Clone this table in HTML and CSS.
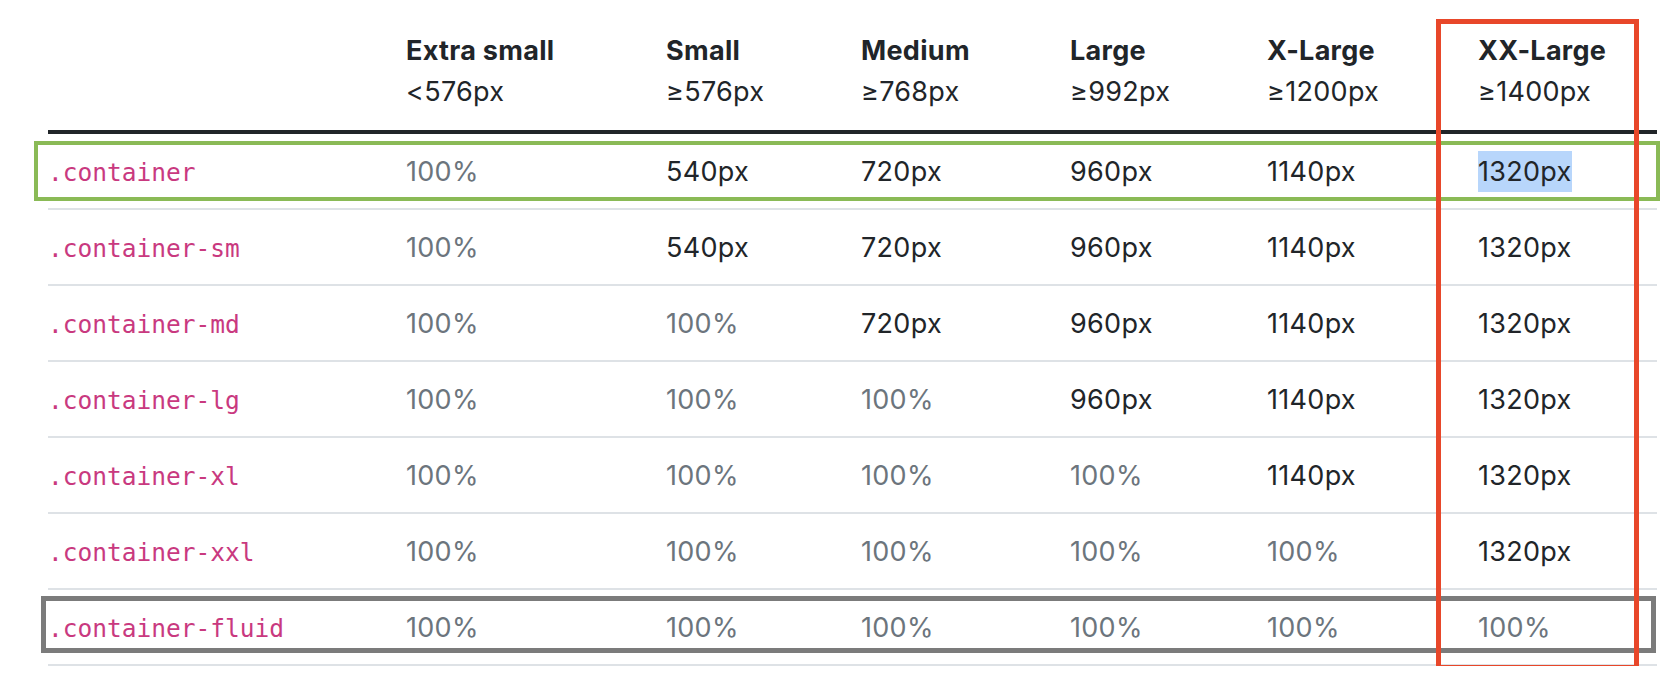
FILE: index.html
```html
<!DOCTYPE html>
<html lang="en">
<head>
<meta charset="utf-8">
<title>Containers</title>
<link rel="stylesheet" href="styles.css">
</head>
<body>
<div class="page">
  <table class="bp-table">
    <colgroup>
      <col class="c-name"><col class="c-xs"><col class="c-sm"><col class="c-md"><col class="c-lg"><col class="c-xl"><col class="c-xxl">
    </colgroup>
    <thead>
      <tr>
        <th></th>
        <th>Extra small<br><span class="bp">&lt;576px</span></th>
        <th>Small<br><span class="bp">&ge;576px</span></th>
        <th>Medium<br><span class="bp">&ge;768px</span></th>
        <th>Large<br><span class="bp">&ge;992px</span></th>
        <th>X-Large<br><span class="bp">&ge;1200px</span></th>
        <th>XX-Large<br><span class="bp">&ge;1400px</span></th>
      </tr>
    </thead>
    <tbody>
      <tr>
        <td><code>.container</code></td>
        <td class="muted">100%</td><td>540px</td><td>720px</td><td>960px</td><td>1140px</td><td><span class="sel">1320px</span></td>
      </tr>
      <tr>
        <td><code>.container-sm</code></td>
        <td class="muted">100%</td><td>540px</td><td>720px</td><td>960px</td><td>1140px</td><td>1320px</td>
      </tr>
      <tr>
        <td><code>.container-md</code></td>
        <td class="muted">100%</td><td class="muted">100%</td><td>720px</td><td>960px</td><td>1140px</td><td>1320px</td>
      </tr>
      <tr>
        <td><code>.container-lg</code></td>
        <td class="muted">100%</td><td class="muted">100%</td><td class="muted">100%</td><td>960px</td><td>1140px</td><td>1320px</td>
      </tr>
      <tr>
        <td><code>.container-xl</code></td>
        <td class="muted">100%</td><td class="muted">100%</td><td class="muted">100%</td><td class="muted">100%</td><td>1140px</td><td>1320px</td>
      </tr>
      <tr>
        <td><code>.container-xxl</code></td>
        <td class="muted">100%</td><td class="muted">100%</td><td class="muted">100%</td><td class="muted">100%</td><td class="muted">100%</td><td>1320px</td>
      </tr>
      <tr>
        <td><code>.container-fluid</code></td>
        <td class="muted">100%</td><td class="muted">100%</td><td class="muted">100%</td><td class="muted">100%</td><td class="muted">100%</td><td class="muted">100%</td>
      </tr>
    </tbody>
  </table>
  <div class="mark mark-green"></div>
  <div class="mark mark-gray"></div>
  <div class="mark mark-red"></div>
</div>
</body>
</html>
```

FILE: styles.css
```css
html, body {
  margin: 0;
  padding: 0;
  background: #ffffff;
}

.page {
  position: relative;
  padding: 13px 0 0 48px;
  font-family: Inter, "Liberation Sans", sans-serif;
  font-size: 27px;
  line-height: 41px;
  letter-spacing: 0.3px;
  color: #212529;
}

.bp-table {
  border-collapse: collapse;
  table-layout: fixed;
  width: 1609px;
}

.c-name { width: 358px; }
.c-xs { width: 260px; }
.c-sm { width: 195px; }
.c-md { width: 209px; }
.c-lg { width: 197px; }
.c-xl { width: 211px; }
.c-xxl { width: 179px; }

.bp-table th {
  text-align: left;
  font-weight: 700;
  padding: 17px 0 18px 0;
  vertical-align: bottom;
  border-bottom: 4px solid #212529;
}

.bp-table th .bp {
  font-weight: 400;
}

.bp-table td {
  height: 41px;
  padding: 17px 0 16px 0;
  border-bottom: 2px solid #dee2e6;
  white-space: nowrap;
  vertical-align: top;
}

.bp-table code {
  font-family: "DejaVu Sans Mono", "Liberation Mono", monospace;
  font-size: 24.5px;
  line-height: 1;
  letter-spacing: 0;
  color: #c9397f;
}

.muted {
  color: #6c757d;
}

.sel {
  display: inline-block;
  background: #b8d6fb;
  line-height: 41px;
  vertical-align: top;
}

.mark {
  position: absolute;
  box-sizing: border-box;
  pointer-events: none;
}

.mark-green {
  left: 34px;
  top: 141px;
  width: 1626px;
  height: 60px;
  border: 4px solid #8aba56;
}

.mark-gray {
  left: 41px;
  top: 596px;
  width: 1615px;
  height: 57px;
  border: 5px solid #7b7b7b;
}

.mark-red {
  left: 1436px;
  top: 19px;
  width: 203px;
  height: 651px;
  border: 5px solid #e8472a;
}
```
